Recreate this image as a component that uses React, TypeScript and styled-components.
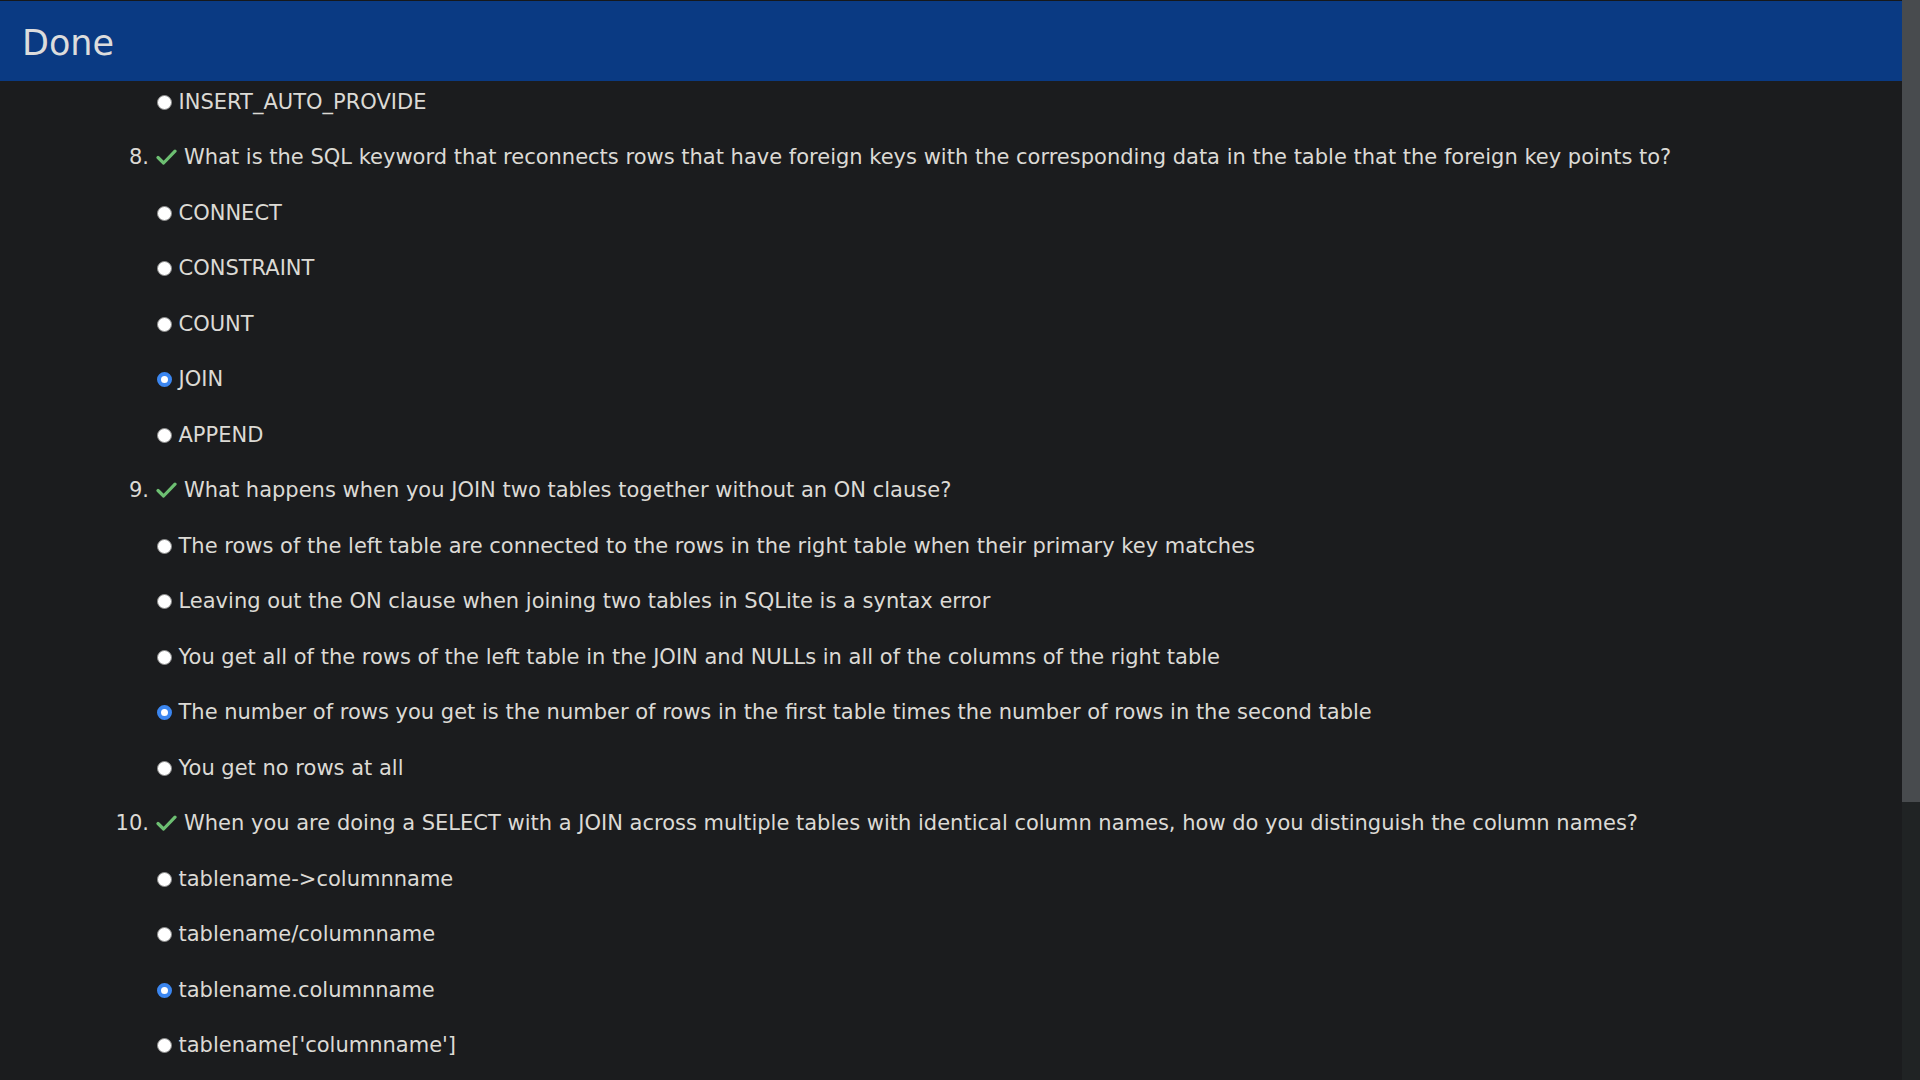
import styled, { createGlobalStyle } from 'styled-components';

const GlobalStyle = createGlobalStyle`
  html, body {
    margin: 0;
    padding: 0;
    background: #1b1c1e;
    overflow: hidden;
  }
  body {
    font-family: "DejaVu Sans", Verdana, sans-serif;
    color: #dcdad5;
  }
`;

const Page = styled.div`
  display: flex;
  height: 100vh;
  background: #1b1c1e;
`;

const Main = styled.div`
  flex: 1;
  display: flex;
  flex-direction: column;
  min-width: 0;
`;

const Header = styled.header`
  position: relative;
  z-index: 1;
  flex-shrink: 0;
  box-sizing: border-box;
  height: 81px;
  border-top: 1px solid #16181b;
  background: #0a3a83;
  padding: 22px 22px 0;
  font-size: 35px;
  color: #dcdcdc;
`;

const Body = styled.div`
  flex: 1;
  overflow: hidden;
`;

const List = styled.div`
  margin-top: -7.2px;
  display: flex;
  flex-direction: column;
`;

const Row = styled.div`
  height: 55.5px;
  display: flex;
  align-items: center;
  font-size: 21px;
  white-space: nowrap;
`;

const OptionRow = styled(Row)`
  padding-left: 157px;
`;

const Number = styled.span`
  width: 149px;
  text-align: right;
  flex-shrink: 0;
`;

const Check = styled.svg`
  width: 21px;
  height: 16px;
  margin: 0 7px;
  flex-shrink: 0;
`;

const Radio = styled.span<{ $checked?: boolean }>`
  box-sizing: border-box;
  width: 15px;
  height: 15px;
  border-radius: 50%;
  flex-shrink: 0;
  margin: 1px 6.5px 0 0;
  background: #fff;
  border: ${(p) => (p.$checked ? '4px solid #3b86f0' : '1px solid #8a8a8a')};
`;

const ScrollTrack = styled.div`
  width: 18px;
  flex-shrink: 0;
  background: #202324;
  display: flex;
  flex-direction: column;
`;

const ScrollThumb = styled.div`
  height: 802px;
  background: #484b4e;
`;

interface Question {
  n?: number;
  text?: string;
  options: { text: string; checked?: boolean }[];
}

const questions: Question[] = [
  { options: [{ text: 'INSERT_AUTO_PROVIDE' }] },
  {
    n: 8,
    text: 'What is the SQL keyword that reconnects rows that have foreign keys with the corresponding data in the table that the foreign key points to?',
    options: [
      { text: 'CONNECT' },
      { text: 'CONSTRAINT' },
      { text: 'COUNT' },
      { text: 'JOIN', checked: true },
      { text: 'APPEND' },
    ],
  },
  {
    n: 9,
    text: 'What happens when you JOIN two tables together without an ON clause?',
    options: [
      { text: 'The rows of the left table are connected to the rows in the right table when their primary key matches' },
      { text: 'Leaving out the ON clause when joining two tables in SQLite is a syntax error' },
      { text: 'You get all of the rows of the left table in the JOIN and NULLs in all of the columns of the right table' },
      { text: 'The number of rows you get is the number of rows in the first table times the number of rows in the second table', checked: true },
      { text: 'You get no rows at all' },
    ],
  },
  {
    n: 10,
    text: 'When you are doing a SELECT with a JOIN across multiple tables with identical column names, how do you distinguish the column names?',
    options: [
      { text: 'tablename->columnname' },
      { text: 'tablename/columnname' },
      { text: 'tablename.columnname', checked: true },
      { text: "tablename['columnname']" },
    ],
  },
];

const CheckIcon = () => (
  <Check viewBox="0 0 21 16">
    <path
      d="M2 8.5 L7.6 14 L19 2.2"
      fill="none"
      stroke="#6dbf72"
      strokeWidth={3.2}
      strokeLinecap="round"
      strokeLinejoin="round"
    />
  </Check>
);

export default function App() {
  return (
    <>
      <GlobalStyle />
      <Page>
        <Main>
          <Header>Done</Header>
          <Body>
            <List>
              {questions.map((q, i) => (
                <div key={i}>
                  {q.n && (
                    <Row>
                      <Number>{q.n}.</Number>
                      <CheckIcon />
                      <span>{q.text}</span>
                    </Row>
                  )}
                  {q.options.map((o) => (
                    <OptionRow key={o.text}>
                      <Radio $checked={o.checked} />
                      <span>{o.text}</span>
                    </OptionRow>
                  ))}
                </div>
              ))}
            </List>
          </Body>
        </Main>
        <ScrollTrack>
          <ScrollThumb />
        </ScrollTrack>
      </Page>
    </>
  );
}
